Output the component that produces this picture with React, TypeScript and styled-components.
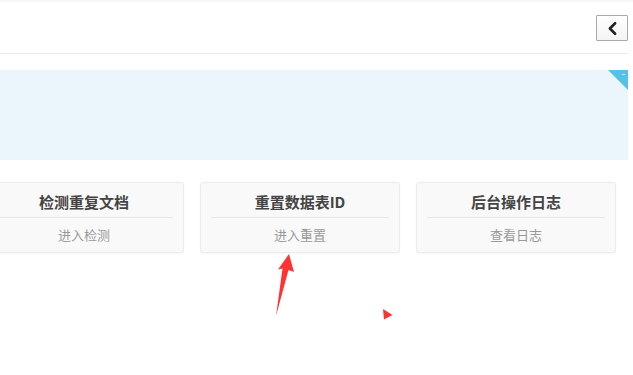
import React from 'react';
import styled, { createGlobalStyle } from 'styled-components';
import { ChevronLeft } from 'lucide-react';

const GlobalStyle = createGlobalStyle`
  html, body {
    margin: 0;
    padding: 0;
    background: #fff;
    font-family: "Noto Sans CJK SC", "Liberation Sans", sans-serif;
  }
`;

const tools = [
  { title: '检测重复文档', action: '进入检测' },
  { title: '重置数据表ID', action: '进入重置' },
  { title: '后台操作日志', action: '查看日志' },
];

const App = () => {
  return (
    <Page>
      <GlobalStyle />
      <Frame>
        <Header>
          <BackButton>
            <ChevronLeft size={21} strokeWidth={3} />
          </BackButton>
        </Header>
        <InfoPanel>
          <Corner>
            <CornerMark>-</CornerMark>
          </Corner>
        </InfoPanel>
        <CardRow>
          {tools.map((t) => (
            <ToolCard key={t.title}>
              <CardTitle>{t.title}</CardTitle>
              <CardAction>{t.action}</CardAction>
            </ToolCard>
          ))}
        </CardRow>
      </Frame>
      <Annotation width="633" height="375" viewBox="0 0 633 375">
        <polygon
          points="289,254 294,272 288.5,270 276,316 282.5,268.5 278,269.5"
          fill="#ff3333"
        />
        <polygon points="383,309 392.5,315 384,319.5" fill="#ff3333" />
      </Annotation>
    </Page>
  );
};

export default App;

const Page = styled.div`
  position: relative;
  width: 633px;
  height: 375px;
  overflow: hidden;
  border-top: 2px solid #f6f6f6;
  box-sizing: border-box;
`;

const Frame = styled.div`
  width: 628px;
`;

const Header = styled.div`
  height: 52px;
  border-bottom: 1px solid #e9e9e9;
  display: flex;
  justify-content: flex-end;
  align-items: flex-start;
  padding-top: 13px;
  box-sizing: border-box;
`;

const BackButton = styled.button`
  width: 32px;
  height: 26px;
  border: 1px solid #a9a9a9;
  border-radius: 1px;
  background: linear-gradient(#ffffff, #f4f4f4);
  color: #222;
  display: flex;
  align-items: center;
  justify-content: center;
  padding: 0;
  margin: 0;
`;

const InfoPanel = styled.div`
  position: relative;
  margin-top: 16px;
  height: 90px;
  background: #eaf6fc;
`;

const Corner = styled.div`
  position: absolute;
  top: 0;
  right: 0;
  width: 20px;
  height: 20px;
  background: #55c1e7;
  clip-path: polygon(0 0, 100% 0, 100% 100%);
`;

const CornerMark = styled.span`
  position: absolute;
  top: -3px;
  right: 3px;
  color: #fff;
  font-size: 10px;
  line-height: 14px;
  font-family: "Liberation Sans", sans-serif;
`;

const CardRow = styled.div`
  display: flex;
  justify-content: flex-end;
  gap: 16px;
  margin-top: 22px;
  padding-right: 12px;
`;

const ToolCard = styled.div`
  flex: 0 0 200px;
  box-sizing: border-box;
  height: 71px;
  background: #f9f9f9;
  border: 1px solid #ececec;
  border-radius: 3px;
  box-shadow: 0 1px 2px rgba(0, 0, 0, 0.04);
  padding: 0 10px;
  text-align: center;
`;

const CardTitle = styled.div`
  padding: 8px 0 4px;
  line-height: 22px;
  font-size: 15px;
  font-weight: bold;
  color: #444;
  border-bottom: 1px solid #e6e6e6;
`;

const CardAction = styled.div`
  padding: 7px 0 6px;
  line-height: 20px;
  font-size: 13px;
  color: #999;
`;

const Annotation = styled.svg`
  position: absolute;
  left: 0;
  top: -2px;
  pointer-events: none;
`;
